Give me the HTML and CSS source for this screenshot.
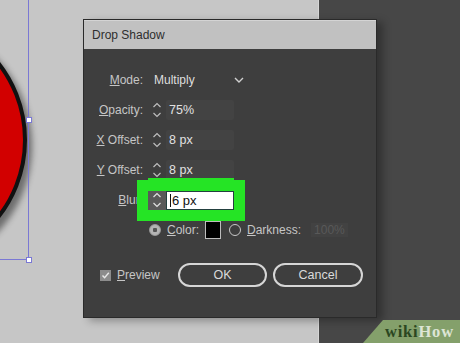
FILE: index.html
```html
<!DOCTYPE html>
<html lang="en">
<head>
  <meta charset="UTF-8" />
  <meta name="viewport" content="width=device-width, initial-scale=1" />
  <title>Drop Shadow</title>
  <link rel="stylesheet" href="styles.css">
</head>
<body>
  <div class="canvas">
    <div class="circle"></div>
    <div class="selection">
      <span class="handle handle-mid"></span>
      <span class="handle handle-corner"></span>
    </div>
  </div>
  <div class="panel"></div>

  <div class="dialog">
    <div class="titlebar">Drop Shadow</div>
    <div class="dialog-body">
      <div class="form">
        <label><u>M</u>ode:</label>
        <div class="select">
          <span>Multiply</span>
          <svg width="10" height="6" viewBox="0 0 10 6"><path d="M1 1 L5 5 L9 1" fill="none" stroke="#d0d0d0" stroke-width="1.4"/></svg>
        </div>

        <label><u>O</u>pacity:</label>
        <div class="field">
          <span class="spin"><svg width="10" height="18" viewBox="0 0 10 18"><path d="M1.5 6 L5 2.5 L8.5 6 M1.5 12 L5 15.5 L8.5 12" fill="none" stroke="#bdbdbd" stroke-width="1.2"/></svg></span>
          <span class="num">75%</span>
        </div>

        <label><u>X</u> Offset:</label>
        <div class="field">
          <span class="spin"><svg width="10" height="18" viewBox="0 0 10 18"><path d="M1.5 6 L5 2.5 L8.5 6 M1.5 12 L5 15.5 L8.5 12" fill="none" stroke="#bdbdbd" stroke-width="1.2"/></svg></span>
          <span class="num">8 px</span>
        </div>

        <label><u>Y</u> Offset:</label>
        <div class="field">
          <span class="spin"><svg width="10" height="18" viewBox="0 0 10 18"><path d="M1.5 6 L5 2.5 L8.5 6 M1.5 12 L5 15.5 L8.5 12" fill="none" stroke="#bdbdbd" stroke-width="1.2"/></svg></span>
          <span class="num">8 px</span>
        </div>

        <label><u>B</u>lur:</label>
        <div class="field field-active">
          <span class="spin"><svg width="10" height="18" viewBox="0 0 10 18"><path d="M1.5 6 L5 2.5 L8.5 6 M1.5 12 L5 15.5 L8.5 12" fill="none" stroke="#e0e0e0" stroke-width="1.2"/></svg></span>
          <span class="num"><i class="caret"></i>6 px</span>
        </div>

        <span></span>
        <div class="color-row">
          <span class="radio checked"></span>
          <span><u>C</u>olor:</span>
          <span class="swatch"></span>
          <span class="radio"></span>
          <span><u>D</u>arkness:</span>
          <span class="dim">100%</span>
        </div>
      </div>

      <div class="footer">
        <span class="check"><svg width="11" height="11" viewBox="0 0 11 11"><rect width="11" height="11" fill="#8c8c8c"/><path d="M2.5 5.5 L4.6 7.8 L8.8 2.8" fill="none" stroke="#e8e8e8" stroke-width="1.4"/></svg></span>
        <span class="check-label"><u>P</u>review</span>
        <button class="btn btn-ok">OK</button>
        <button class="btn">Cancel</button>
      </div>
    </div>
  </div>

  <div class="badge"><span class="wiki">wiki</span><span class="how">How</span></div>
</body>
</html>
```

FILE: styles.css
```css
body {
  margin: 0;
  width: 460px;
  height: 343px;
  overflow: hidden;
  position: relative;
  display: grid;
  grid-template-columns: 319px 141px;
  font-family: "Liberation Sans", Arial, sans-serif;
  font-size: 12px;
}
.canvas {
  position: relative;
  overflow: hidden;
  background: #c6c6c6;
  border-right: 1px solid #d6d6d6;
}
.panel {
  background: #474747;
}

/* artwork on the canvas */
.circle {
  position: absolute;
  left: -225px;
  top: 14px;
  width: 252px;
  height: 252px;
  box-sizing: border-box;
  border-radius: 50%;
  background: #d20000;
  border: 4px solid #111;
  box-shadow: 5px 6px 6px rgba(0, 0, 0, 0.45);
}
.selection {
  position: absolute;
  left: -211px;
  top: -20px;
  width: 238px;
  height: 278px;
  border: 1px solid #7a78d4;
}
.handle {
  position: absolute;
  width: 4px;
  height: 4px;
  background: #fff;
  border: 1px solid #7a78d4;
}
.handle-mid {
  right: -4px;
  top: 136px;
}
.handle-corner {
  right: -4px;
  bottom: -4px;
}

/* dialog window */
.dialog {
  position: absolute;
  left: 83px;
  top: 19px;
  width: 294px;
  height: 299px;
  box-sizing: border-box;
  background: #3e3e3e;
  border: 1px solid #2a2a2a;
  box-shadow: 6px 3px 8px rgba(0, 0, 0, 0.3);
}
.titlebar {
  height: 29px;
  line-height: 29px;
  padding-left: 8px;
  background: #c1c1c1;
  border-top: 1px solid #d4d4d4;
  box-sizing: border-box;
  color: #2e2e2e;
  font-size: 12px;
}
.dialog-body {
  padding-top: 16px;
}
.form {
  display: grid;
  grid-template-columns: 59px 1fr;
  grid-auto-rows: 30px;
  column-gap: 5px;
  align-items: center;
}
.form label {
  text-align: right;
  color: #c6c6c6;
  white-space: nowrap;
}
.select {
  width: 96px;
  display: flex;
  align-items: center;
  justify-content: space-between;
  padding-left: 6px;
  color: #dedede;
  box-sizing: border-box;
}
.field {
  display: flex;
  align-items: center;
  width: 86px;
  height: 20px;
}
.spin {
  width: 18px;
  height: 20px;
  display: flex;
  align-items: center;
  justify-content: center;
}
.num {
  flex: 1;
  height: 20px;
  line-height: 20px;
  padding-left: 3px;
  background: #434343;
  border-radius: 2px;
  color: #e2e2e2;
  font-size: 12.5px;
}
/* highlighted blur field */
.field-active {
  position: relative;
  z-index: 1;
  height: 19px;
  background: #25e425;
  outline: 11px solid #25e425;
  box-shadow: 0 -13px 0 0 #25e425;
}
.field-active .spin {
  height: 19px;
  background: #595959;
}
.field-active .num {
  height: 17px;
  line-height: 17px;
  background: #fff;
  color: #111;
  border: 1px solid #23403f;
  border-radius: 0;
  font-size: 13px;
}
.caret {
  display: inline-block;
  width: 1px;
  height: 13px;
  margin-right: 1px;
  vertical-align: -2px;
  background: #111;
}
.color-row {
  display: flex;
  align-items: center;
  color: #c6c6c6;
  padding-left: 1px;
  white-space: nowrap;
}
.radio {
  width: 10px;
  height: 10px;
  border-radius: 50%;
  border: 1.5px solid #c8c8c8;
  margin-right: 6px;
  margin-left: 8px;
}
.radio.checked {
  margin-left: 0;
  background: radial-gradient(circle, #555 0 2px, #b4b4b4 2.5px);
  border-color: #9a9a9a;
}
.swatch {
  width: 14px;
  height: 16px;
  margin-left: 6px;
  background: #000;
  border: 1px solid #bdbdbd;
}
.dim {
  margin-left: 10px;
  padding: 0 3px;
  color: #595959;
  background: #424242;
}

/* bottom row */
.footer {
  display: flex;
  align-items: center;
  height: 24px;
  margin-top: 18px;
  padding: 0 13px 0 16px;
}
.check {
  display: flex;
  margin-right: 6px;
}
.check-label {
  color: #c6c6c6;
}
.btn {
  width: 90px;
  height: 24px;
  border: 2px solid #d6d6d6;
  border-radius: 12px;
  background: transparent;
  color: #dadada;
  font-family: "Liberation Sans", Arial, sans-serif;
  font-size: 12.5px;
  padding: 0;
}
.btn-ok {
  margin-left: auto;
  margin-right: 6px;
  width: 89px;
}

/* corner watermark */
.badge {
  position: absolute;
  left: 363px;
  top: 320px;
  width: 97px;
  height: 23px;
  padding-left: 22px;
  box-sizing: border-box;
  background: #84a06b;
  clip-path: polygon(20px 0, 100% 0, 100% 100%, 0 100%);
  font-family: "Liberation Serif", serif;
  font-weight: bold;
  font-size: 16.5px;
  letter-spacing: 0.8px;
  line-height: 24px;
}
.wiki {
  color: #2b4721;
}
.how {
  color: #dde5d5;
}
```
